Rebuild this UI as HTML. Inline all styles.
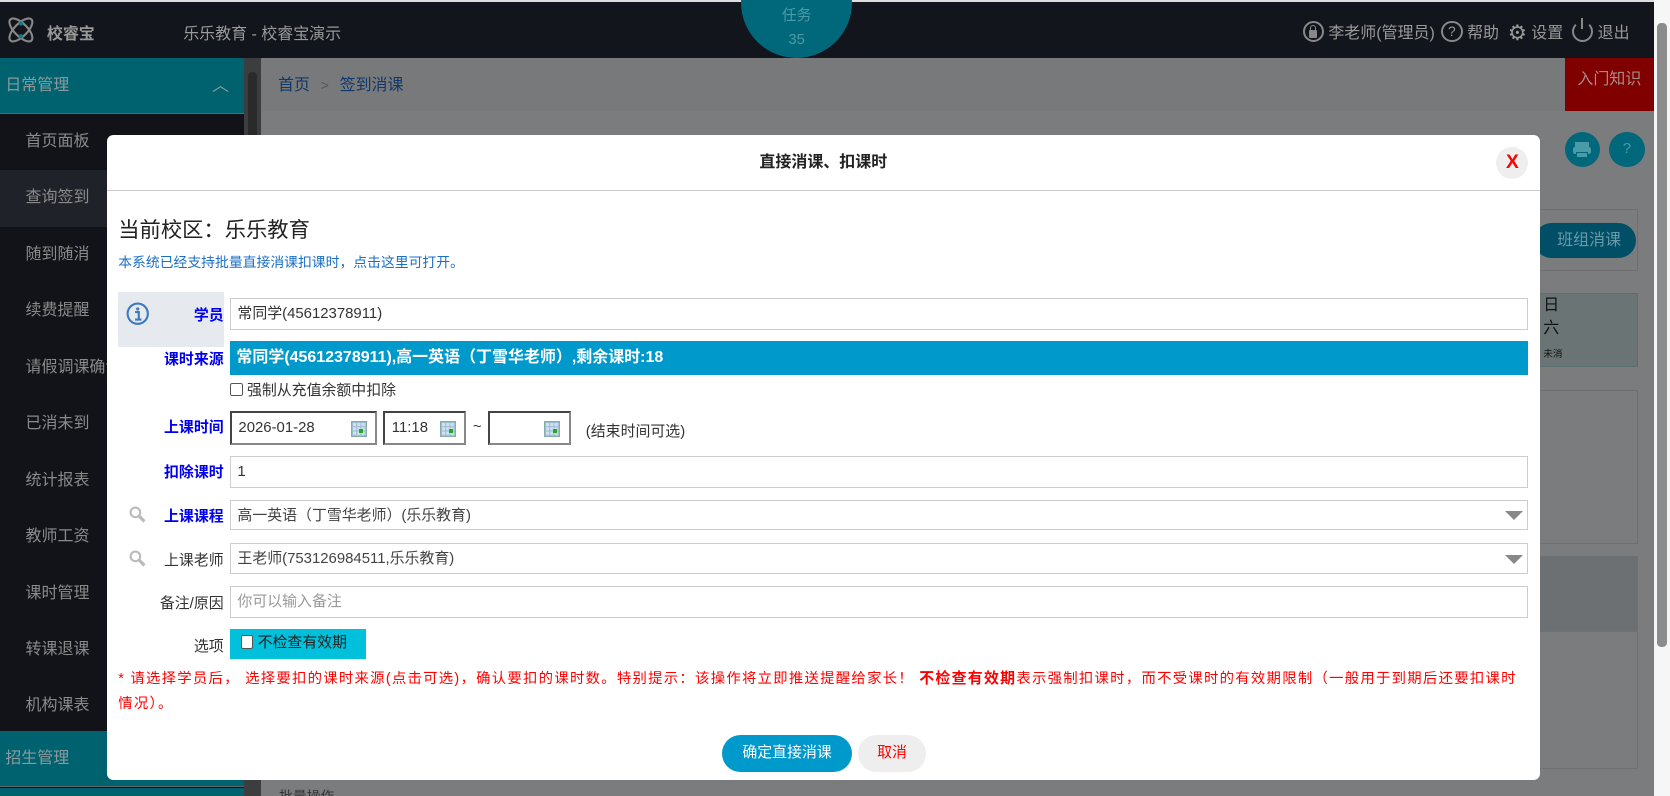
<!DOCTYPE html>
<html><head><meta charset="utf-8"><style>
*{box-sizing:border-box;margin:0;padding:0}
html,body{width:1670px;height:796px;overflow:hidden;background:#7b7c7d}
#w{position:relative;width:1568px;height:747px;zoom:1.0651;font-family:"Liberation Sans","Noto Sans CJK SC",sans-serif;font-size:14px;color:#333;overflow:hidden;background:#7b7c7d}
.a{position:absolute}
.top{left:0;top:0;width:1553px;height:54px;background:#12151b;border-top:2px solid #ddd}
.side{left:0;top:54px;width:229px;height:693px;background:#111318}
.si{position:absolute;left:0;width:229px;height:53px;line-height:53px;padding-left:24px;color:#8a8a8a;font-size:15px}
.lab{position:absolute;left:111px;width:99px;text-align:right;font-size:14px}
.blue{color:#0000ee;font-weight:bold}
.inp{position:absolute;left:216px;width:1219px;height:30px;border:1px solid #ccc;line-height:30px;padding-left:6px;font-size:14px;color:#333;background:#fff}
.dt{position:absolute;height:32px;border:2px solid #444;border-right-color:#888;border-bottom-color:#888;line-height:30px;padding-left:6px;font-size:14px;background:#fff}
.cal{position:absolute;right:8px;top:7px;width:15px;height:15px;background:#cfe0f5;border:1px solid #8aa;background-image:linear-gradient(#9bc 1px,transparent 1px),linear-gradient(90deg,#9bc 1px,transparent 1px);background-size:4px 4px}
.cal:after{content:"";position:absolute;right:2px;bottom:2px;width:4px;height:4px;background:#2a2}
.tri{position:absolute;right:4px;top:10px;border-left:9px solid transparent;border-right:9px solid transparent;border-top:9px solid #888}
.mag{position:absolute;left:121px;width:16px;height:16px}
</style></head><body><div id="w">
<div class="a top">
 <svg class="a" style="left:6px;top:12px" width="28" height="28" viewBox="0 0 28 28"><ellipse cx="14" cy="14" rx="6" ry="14" transform="rotate(45 14 14)" fill="none" stroke="#888" stroke-width="2"/><ellipse cx="14" cy="14" rx="6" ry="14" transform="rotate(-45 14 14)" fill="none" stroke="#888" stroke-width="2"/><circle cx="14" cy="8" r="2" fill="#0a7d8a"/><circle cx="14" cy="20" r="2" fill="#0a7d8a"/></svg>
 <div class="a" style="left:44px;top:17px;color:#999;font-weight:bold;font-size:15px">校睿宝</div>
 <div class="a" style="left:172px;top:17px;color:#999;font-size:15px">乐乐教育 - 校睿宝演示</div>
 <div class="a" style="left:1223px;top:16px;color:#999;font-size:15px;white-space:nowrap">
  <span style="display:inline-block;width:20px;height:20px;border:2px solid #888;border-radius:50%;vertical-align:-4px;position:relative"><i style="position:absolute;left:4px;top:7px;width:8px;height:7px;background:#888;border-radius:1px"></i><i style="position:absolute;left:5px;top:2px;width:6px;height:7px;border:1.5px solid #888;border-bottom:none;border-radius:3px 3px 0 0"></i></span> 李老师(管理员)
  <span style="display:inline-block;width:20px;height:20px;border:2px solid #888;border-radius:50%;vertical-align:-4px;text-align:center;font-size:13px;line-height:16px;margin-left:2px;position:relative"><i style="position:absolute;left:0;top:0;width:16px;text-align:center;font-style:normal">?</i></span> 帮助
  <span style="font-size:20px;vertical-align:-2px;margin-left:4px">⚙</span> 设置
  <span style="display:inline-block;width:20px;height:20px;border:2px solid #888;border-top-color:transparent;border-radius:50%;vertical-align:-4px;margin-left:4px;position:relative"><i style="position:absolute;left:7px;top:-5px;width:2px;height:11px;background:#888"></i></span> 退出
 </div>
</div>
<div class="a" style="left:696px;top:-50px;width:104px;height:104px;border-radius:50%;background:#00687a;text-align:center;color:#4a9aa8;font-size:14px;padding-top:55px;line-height:22px">任务<br>35</div>
<div class="a side">
 <div class="si" style="top:0;background:#00626f;padding-left:5px;color:#8a9a9c;border-bottom:1px solid #666">日常管理<span style="position:absolute;right:14px;top:0;font-size:16px">︿</span></div>
 <div class="si" style="top:53px">首页面板</div>
 <div class="si" style="top:106px;background:#202229">查询签到</div>
 <div class="si" style="top:159px">随到随消</div>
 <div class="si" style="top:212px">续费提醒</div>
 <div class="si" style="top:265px">请假调课确认</div>
 <div class="si" style="top:318px">已消未到</div>
 <div class="si" style="top:371px">统计报表</div>
 <div class="si" style="top:424px">教师工资</div>
 <div class="si" style="top:477px">课时管理</div>
 <div class="si" style="top:530px">转课退课</div>
 <div class="si" style="top:583px">机构课表</div>
 <div class="si" style="top:632px;background:#00626f;padding-left:5px;color:#8a9a9c;height:53px;border-bottom:1px solid #666">招生管理</div>
 <div class="si" style="top:686px;background:#00626f;height:10px"></div>
</div>
<div class="a" style="left:229px;top:54px;width:16px;height:693px;background:#3c3d3e"><div class="a" style="left:4px;top:14px;width:8px;height:100px;background:#2a2a2a;border-radius:4px"></div></div>
<div class="a" style="left:245px;top:54px;width:1308px;height:50px;background:#78797a"><span class="a" style="left:16px;top:13px;color:#10386a;font-size:15px">首页 <span style="color:#555;margin:0 6px;font-size:13px">&gt;</span> 签到消课</span></div>
<div class="a" style="left:1469px;top:54px;width:84px;height:50px;background:#800000;color:#a88;font-size:15px;line-height:42px;text-align:center">入门知识</div>
<div class="a" style="left:1553px;top:0;width:15px;height:747px;background:#f6f6f6"><div class="a" style="left:3px;top:22px;width:9px;height:585px;background:#8c8c8c;border-radius:4px"></div></div>
<div class="a" style="left:1469px;top:124px;width:33px;height:33px;border-radius:50%;background:#00687a"><i class="a" style="left:10px;top:9px;width:13px;height:5px;background:#4a9aa8"></i><i class="a" style="left:8px;top:14px;width:17px;height:7px;background:#4a9aa8;border-radius:2px"></i><i class="a" style="left:11px;top:19px;width:11px;height:5px;background:#4a9aa8;border:1px solid #00687a"></i></div>
<div class="a" style="left:1511px;top:124px;width:33px;height:33px;border-radius:50%;background:#00687a;color:#4a9aa8;text-align:center;line-height:33px">?</div>
<div class="a" style="left:1420px;top:196px;width:118px;height:58px;border:1px solid #6f6f6f"></div>
<div class="a" style="left:1440px;top:209px;width:96px;height:33px;border-radius:17px;background:#004f66;color:#6a9aa8;font-size:15px;line-height:33px;text-align:right;padding-right:14px">班组消课</div>
<div class="a" style="left:1430px;top:275px;width:108px;height:70px;background:#6a7474;border:1px solid #5a7070;color:#111;font-size:15px;padding:0 0 0 18px;line-height:22px">日<br>六<br><span style="font-size:9px">未消</span></div>
<div class="a" style="left:1430px;top:366px;width:108px;height:145px;border:1px solid #6f6f6f"></div>
<div class="a" style="left:1430px;top:522px;width:108px;height:70px;background:#6c7072"></div>
<div class="a" style="left:1430px;top:592px;width:108px;height:130px;border:1px solid #717171"></div>
<div class="a" style="left:100px;top:127px;width:1346px;height:605px;background:#fff;border-radius:6px">
 <div class="a" style="left:0;top:0;width:1346px;height:52px;border-bottom:1px solid #ccc;text-align:center;line-height:52px;font-weight:bold;font-size:15px;color:#222">直接消课、扣课时</div>
 <div class="a" style="left:1305px;top:11px;width:30px;height:30px;border-radius:50%;background:#eee;color:#f00;font-weight:bold;font-size:18px;text-align:center;line-height:30px">X</div>
</div>
<div class="a" style="left:111px;top:200px;font-size:20px;color:#222">当前校区：乐乐教育</div>
<div class="a" style="left:111px;top:236px;font-size:13px;color:#1a6fc6">本系统已经支持批量直接消课扣课时，点击这里可打开。</div>
<div class="a" style="left:111px;top:274px;width:99px;height:52px;background:#e6e9ee"></div>
<svg class="a" style="left:118px;top:284px" width="22" height="22" viewBox="0 0 22 22"><circle cx="11" cy="11" r="9.5" fill="none" stroke="#3a7ac0" stroke-width="2"/><circle cx="11" cy="6.5" r="1.5" fill="#3a7ac0"/><path d="M8.5 9.5h3.5v7M8.5 16.5h6" stroke="#3a7ac0" stroke-width="2" fill="none"/></svg>
<div class="lab blue" style="top:285px">学员</div>
<div class="inp" style="top:280px">常同学(45612378911)</div>
<div class="lab blue" style="top:327px">课时来源</div>
<div class="a" style="left:216px;top:320px;width:1219px;height:32px;background:#0099cc;color:#fff;font-weight:bold;font-size:15px;line-height:32px;padding-left:6px">常同学(45612378911),高一英语（丁雪华老师）,剩余课时:18</div>
<div class="a" style="left:216px;top:356px;font-size:14px"><span style="display:inline-block;width:12px;height:12px;border:1px solid #555;border-radius:2px;vertical-align:-1px"></span> 强制从充值余额中扣除</div>
<div class="lab blue" style="top:391px">上课时间</div>
<div class="dt" style="left:216px;top:386px;width:138px">2026-01-28<i class="cal"></i></div>
<div class="dt" style="left:360px;top:386px;width:78px">11:18<i class="cal"></i></div>
<div class="a" style="left:444px;top:393px">~</div>
<div class="dt" style="left:458px;top:386px;width:78px"><i class="cal"></i></div>
<div class="a" style="left:550px;top:394px">(结束时间可选)</div>
<div class="lab blue" style="top:433px">扣除课时</div>
<div class="inp" style="top:428px">1</div>
<svg class="mag" style="top:475px" viewBox="0 0 16 16"><circle cx="6" cy="6" r="4.5" fill="none" stroke="#bbb" stroke-width="2"/><path d="M9.5 9.5l5 5" stroke="#bbb" stroke-width="3"/></svg>
<div class="lab blue" style="top:474px">上课课程</div>
<div class="inp" style="top:469px;height:29px;line-height:29px;color:#444">高一英语（丁雪华老师）(乐乐教育)<i class="tri"></i></div>
<svg class="mag" style="top:516px" viewBox="0 0 16 16"><circle cx="6" cy="6" r="4.5" fill="none" stroke="#bbb" stroke-width="2"/><path d="M9.5 9.5l5 5" stroke="#bbb" stroke-width="3"/></svg>
<div class="lab" style="top:515px">上课老师</div>
<div class="inp" style="top:510px;height:29px;line-height:29px;color:#444">王老师(753126984511,乐乐教育)<i class="tri"></i></div>
<div class="lab" style="top:556px">备注/原因</div>
<div class="inp" style="top:550px;color:#999">你可以输入备注</div>
<div class="lab" style="top:596px">选项</div>
<div class="a" style="left:216px;top:591px;width:128px;height:28px;background:#00c0dc;line-height:28px;padding-left:10px;color:#222;font-size:14px"><span style="display:inline-block;width:12px;height:13px;border:1px solid #555;border-radius:2px;background:#fff;vertical-align:-1px"></span> 不检查有效期</div>
<div class="a" style="left:111px;top:626px;width:1330px;color:#f00;font-size:13.5px;line-height:24px;letter-spacing:1.2px;white-space:nowrap">* 请选择学员后， 选择要扣的课时来源(点击可选)，确认要扣的课时数。特别提示：该操作将立即推送提醒给家长！ <b style="font-size:14px">不检查有效期</b>表示强制扣课时，而不受课时的有效期限制（一般用于到期后还要扣课时<br>情况）。</div>
<div class="a" style="left:678px;top:690px;width:122px;height:35px;border-radius:18px;background:#0099cc;color:#fff;text-align:center;line-height:35px;font-size:14px">确定直接消课</div>
<div class="a" style="left:806px;top:690px;width:63px;height:35px;border-radius:18px;background:#eee;color:#f00;text-align:center;line-height:35px;font-size:14px">取消</div>
<div class="a" style="left:262px;top:737px;color:#333;font-size:13px">批量操作</div>
</div></body></html>
